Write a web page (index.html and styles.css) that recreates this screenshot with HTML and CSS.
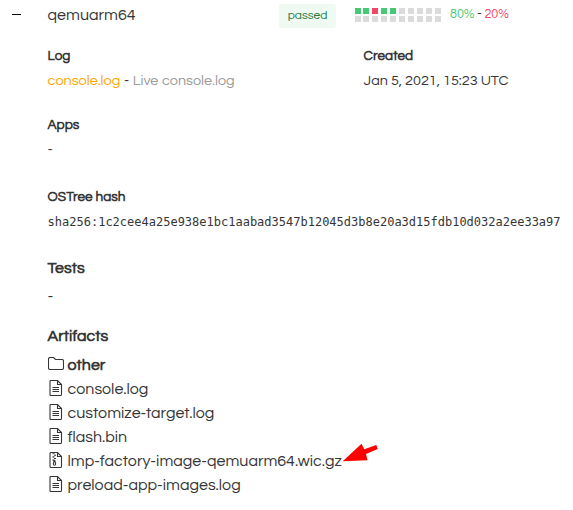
FILE: index.html
```html
<!DOCTYPE html>
<html lang="en">
<head>
<meta charset="utf-8">
<title>qemuarm64</title>
<link rel="stylesheet" href="styles.css">
</head>
<body>
<svg class="defs" aria-hidden="true">
  <symbol id="file" viewBox="0 0 14 17"><path d="M2 .5h6.500l4 4v10q0 1-1 1h-9.500q-1 0-1-1v-13q0-1 1-1zM8.500.5v4h4M3.500 7.500h6.500M3.500 9.500h6.500M3.500 11.500h6.500"/></symbol>
  <symbol id="zip" viewBox="0 0 14 17"><path d="M2 .5h6.500l4 4v10q0 1-1 1h-9.500q-1 0-1-1v-13q0-1 1-1zM8.500.5v4h4"/><path d="M3.500 1.700h2M5 3.300h2M3.500 4.900h2M5 6.500h2M3.500 8.100h2"/><path d="M5.200 8.500l-.9 3.500q.1 1.300 1.200 1.300t1.200-1.300l-.9-3.500z"/></symbol>
</svg>
<header class="target">
  <span class="toggle"></span>
  <h1 class="name">qemuarm64</h1>
  <span class="badge">passed</span>
  <div class="cells">
    <i class="ok"></i><i class="ok"></i><i class="fail"></i><i class="ok"></i><i class="ok"></i><i></i><i></i><i></i><i></i><i></i>
    <i></i><i></i><i></i><i></i><i></i><i></i><i></i><i></i><i></i><i></i>
  </div>
  <p class="rate"><span class="green">80%</span> - <span class="red">20%</span></p>
</header>
<main class="details">
  <div class="columns">
    <section class="log">
      <h2>Log</h2>
      <p><a class="orange">console.log</a> - <a class="grey">Live console.log</a></p>
    </section>
    <section>
      <h2>Created</h2>
      <p>Jan 5, 2021, 15:23 UTC</p>
    </section>
  </div>
  <section class="apps"><h2>Apps</h2><p>-</p></section>
  <section class="hash"><h2>OSTree hash</h2><p class="mono">sha256:1c2cee4a25e938e1bc1aabad3547b12045d3b8e20a3d15fdb10d032a2ee33a97</p></section>
  <section class="tests"><h3>Tests</h3><p>-</p></section>
  <section class="artifacts">
    <h3>Artifacts</h3>
    <ul>
      <li class="folder"><svg viewBox="0 0 16 13"><path d="M.5 2q0-1.500 1.500-1.500h3.500l2 2h6.500q1.500 0 1.500 1.500v7q0 1.500-1.500 1.500h-12q-1.500 0-1.500-1.500z"/></svg><span>other</span></li>
      <li><svg><use href="#file"/></svg><span>console.log</span></li>
      <li><svg><use href="#file"/></svg><span>customize-target.log</span></li>
      <li><svg><use href="#file"/></svg><span>flash.bin</span></li>
      <li><svg><use href="#zip"/></svg><span class="marked">lmp-factory-image-qemuarm64.wic.gz</span><svg class="arrow" viewBox="0 0 37 19"><path d="M.7 18.300L19.500.7 22.300 6.300 34.300 2 35.700 6 24 11 25.500 17.300z"/></svg></li>
      <li><svg><use href="#file"/></svg><span>preload-app-images.log</span></li>
    </ul>
  </section>
</main>
</body>
</html>
```
FILE: styles.css
```css
* { box-sizing: border-box; margin: 0; padding: 0; }
body { width: 573px; height: 510px; overflow: hidden; background: #fff; color: #363636; font: 14.4px/24px Questrial, Inter, sans-serif; white-space: nowrap; }
.defs { display: none; }
.target { display: flex; height: 44px; padding-left: 12px; }
.toggle { width: 9px; height: 1px; margin: 14px 26.6px 0 0; background: #0a0a0a; }
.name { width: 231.4px; padding-top: 3px; font-size: 16px; font-weight: 400; }
.badge { width: 57px; height: 24px; margin-top: 4px; border-radius: 3px; background: #effaf3; color: #257942; font-size: 12px; line-height: 23px; text-align: center; }
.cells { display: grid; grid-template-columns: 8px repeat(9, 9px); grid-template-rows: 6px 6px; row-gap: 2px; width: 89px; height: 14px; margin: 8px 0 0 19px; }
.cells i { width: 6px; height: 6px; background: #dbdbdb; }
.cells .ok { background: #48c774; }
.cells .fail { background: #f14668; }
.rate { padding: 3px 0 0 6px; font-size: 12.6px; }
.green { color: #48c774; }
.red { color: #f14668; }
.details { padding-left: 47.6px; }
.columns { display: flex; height: 69px; }
.log { width: 316px; word-spacing: .6px; }
h2 { height: 25px; font-size: 13.6px; font-weight: 700; line-height: 24px; }
h3 { height: 28px; font-size: 16px; font-weight: 700; line-height: 24px; }
.orange { color: #ffa500; }
.grey { color: #999; }
.apps { height: 72px; }
.hash { height: 71px; }
.tests { height: 68px; }
.tests p { font-size: 16px; }
.mono { font-family: "DejaVu Sans Mono", monospace; font-size: 12px; }
ul { list-style: none; }
li { display: flex; align-items: center; height: 24px; font-size: 16px; }
li svg { flex: none; width: 14px; height: 17px; margin: -1px 5px 0 1px; fill: none; stroke: #363636; stroke-width: 1.1; }
.folder { height: 25px; font-weight: 700; }
.folder svg { width: 16px; height: 13px; margin: -2px 4px 0 0; }
li .arrow { width: 37px; height: 19px; margin: -18px 0 0 0; fill: red; stroke: none; }
.marked { width: 274.4px; }
```
